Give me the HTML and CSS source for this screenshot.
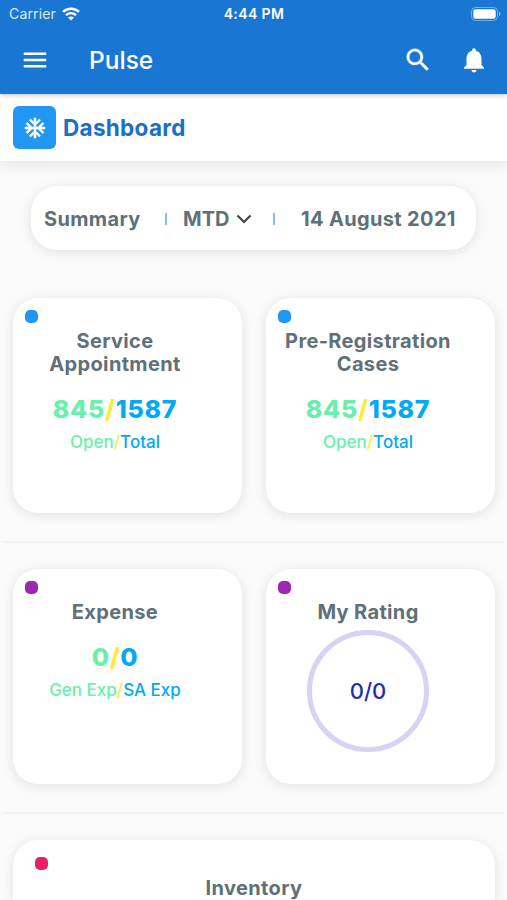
FILE: index.html
```
<!DOCTYPE html>
<html lang="en">
<head>
    <meta charset="UTF-8">
    <meta name="viewport" content="width=device-width, initial-scale=1.0">
    <title>Pulse - Dashboard</title>
    <link rel="stylesheet" href="styles.css">
</head>
<body>

    <header>
        <div class="status-bar">
            <div class="carrier">
                <span>Carrier</span>
                <svg class="wifi" viewBox="0 0 18 14">
                    <path d="M1 4.9C5.5 0.6 12.5 0.6 17 4.9" fill="none" stroke="#fff" stroke-width="2.6"/>
                    <path d="M4 8.2C6.9 5.5 11.1 5.5 14 8.2" fill="none" stroke="#fff" stroke-width="2.4"/>
                    <path d="M9 13.6L6.1 10.7C7.8 9.2 10.2 9.2 11.9 10.7Z" fill="#fff"/>
                </svg>
            </div>
            <span class="time">4:44 PM</span>
            <svg class="battery" viewBox="0 0 30 14">
                <rect x="0.5" y="0.5" width="26" height="13" rx="4" fill="none" stroke="#fff" stroke-opacity="0.4"/>
                <rect x="2.3" y="2.3" width="22.4" height="9.4" rx="2.2" fill="#fff"/>
                <path d="M28 4.8C30 5.5 30 8.5 28 9.2Z" fill="#fff" fill-opacity="0.5"/>
            </svg>
        </div>
        <nav>
            <svg class="icon" viewBox="0 0 24 24"><path d="M3 18h18v-2H3v2zm0-5h18v-2H3v2zm0-7v2h18V6H3z"/></svg>
            <span class="app-name">Pulse</span>
            <svg class="icon search" viewBox="0 0 24 24"><path d="M15.5 14h-.79l-.28-.27C15.41 12.59 16 11.11 16 9.5 16 5.91 13.09 3 9.5 3S3 5.91 3 9.5 5.91 16 9.5 16c1.61 0 3.09-.59 4.23-1.57l.27.28v.79l5 4.99L20.49 19l-4.99-5zm-6 0C7.01 14 5 11.99 5 9.5S7.01 5 9.5 5 14 7.01 14 9.5 11.99 14 9.5 14z"/></svg>
            <svg class="icon bell" viewBox="0 0 24 24"><path d="M12 22c1.1 0 2-.9 2-2h-4c0 1.1.89 2 2 2zm6-6v-5c0-3.07-1.64-5.64-4.5-6.32V4c0-.83-.67-1.5-1.5-1.5s-1.5.67-1.5 1.5v.68C7.63 5.36 6 7.92 6 11v5l-2 2v1h16v-1l-2-2z"/></svg>
        </nav>
    </header>

    <div class="page-title">
        <div class="title-icon">
            <svg viewBox="0 0 24 24"><path d="M22 11h-4.17l3.24-3.24-1.41-1.42L15 11h-2V9l4.66-4.66-1.42-1.41L13 6.17V2h-2v4.17L7.76 2.93 6.34 4.34 11 9v2H9L4.34 6.34 2.93 7.76 6.17 11H2v2h4.17l-3.24 3.24 1.41 1.42L9 13h2v2l-4.66 4.66 1.42 1.41L11 17.83V22h2v-4.17l3.24 3.24 1.42-1.41L13 15v-2h2l4.66 4.66 1.41-1.42L17.83 13H22z"/></svg>
        </div>
        <h1>Dashboard</h1>
    </div>

    <div class="summary">
        <span class="summary-label">Summary</span>
        <span class="bar"></span>
        <span class="period">MTD</span>
        <svg class="chevron" viewBox="0 0 16 10"><path d="M1.5 1.5L8 8L14.5 1.5" fill="none" stroke="#444" stroke-width="2.2"/></svg>
        <span class="bar"></span>
        <span class="date">14 August 2021</span>
    </div>

    <main>
        <div class="row">
            <div class="card">
                <span class="dot blue"></span>
                <h2>Service Appointment</h2>
                <div class="count"><span class="open">845</span><span class="slash">/</span><span class="total">1587</span></div>
                <div class="caption"><span class="open">Open</span><span class="slash">/</span><span class="total">Total</span></div>
            </div>
            <div class="card">
                <span class="dot blue"></span>
                <h2>Pre-Registration Cases</h2>
                <div class="count"><span class="open">845</span><span class="slash">/</span><span class="total">1587</span></div>
                <div class="caption"><span class="open">Open</span><span class="slash">/</span><span class="total">Total</span></div>
            </div>
        </div>

        <hr>

        <div class="row">
            <div class="card">
                <span class="dot purple"></span>
                <h2>Expense</h2>
                <div class="count"><span class="open">0</span><span class="slash">/</span><span class="total">0</span></div>
                <div class="caption"><span class="open">Gen Exp</span><span class="slash">/</span><span class="total">SA Exp</span></div>
            </div>
            <div class="card">
                <span class="dot purple"></span>
                <h2>My Rating</h2>
                <div class="rating">0/0</div>
            </div>
        </div>

        <hr>

        <div class="row">
            <div class="card wide">
                <span class="dot pink"></span>
                <h2>Inventory</h2>
            </div>
        </div>
    </main>

</body>
</html>
```
FILE: styles.css
```
* {
    box-sizing: border-box;
}

body {
    font-family: Inter, "Liberation Sans", sans-serif;
    margin: 0;
    background-color: #fafafa;
    color: #607078;
}

svg {
    display: block;
    flex: none;
}

/* HEADER */
header {
    position: relative;
    z-index: 2;
    height: 94px;
    background: #1976d2;
    color: white;
    box-shadow: 0 1px 5px rgba(0, 0, 0, 0.25);
}

.status-bar {
    display: grid;
    grid-template-columns: 1fr auto 1fr;
    align-items: center;
    height: 27px;
    padding: 0 6px 0 9px;
    font-size: 14px;
}

.carrier {
    display: flex;
    align-items: center;
    gap: 6px;
    color: #dbe9f8;
    letter-spacing: 0.15px;
}

.wifi {
    width: 18px;
    height: 14px;
}

.time {
    font-weight: 600;
    letter-spacing: 0.4px;
    margin-right: 2px;
}

.battery {
    width: 30px;
    height: 14px;
    justify-self: end;
}

nav {
    display: flex;
    align-items: center;
    height: 65px;
    padding: 0 18px 0 20px;
}

.icon {
    width: 30px;
    height: 30px;
    fill: white;
}

.search {
    stroke: white;
    stroke-width: 0.3;
}

.bell {
    margin-left: 26px;
}

.app-name {
    flex: 1;
    margin-left: 39px;
    font-size: 24.5px;
    font-weight: 500;
}

/* PAGE TITLE */
.page-title {
    position: relative;
    display: flex;
    align-items: center;
    gap: 7px;
    height: 67px;
    padding: 0 13px;
    background: white;
    box-shadow: 0 4px 12px rgba(0, 0, 0, 0.09);
}

.title-icon {
    display: flex;
    align-items: center;
    justify-content: center;
    width: 43px;
    height: 43px;
    border-radius: 6px;
    background: #2196f3;
}

.title-icon svg {
    width: 24px;
    height: 24px;
    fill: white;
    stroke: white;
    stroke-width: 0.5;
}

h1 {
    margin: 0;
    font-size: 22.5px;
    font-weight: 700;
    letter-spacing: 0.3px;
    color: #1a6fc9;
}

/* SUMMARY */
.summary {
    display: flex;
    align-items: center;
    height: 64px;
    margin: 25px 31px 48px;
    padding: 1px 13px 0;
    border-radius: 26px;
    background: white;
    box-shadow: 0 2px 12px rgba(0, 0, 0, 0.1);
    font-size: 20px;
    font-weight: 700;
    letter-spacing: 0.35px;
    white-space: nowrap;
}

.summary-label {
    width: 121px;
}

.bar {
    width: 2px;
    height: 12px;
    background: #7fc1f7;
}

.period {
    width: 53px;
    margin-left: 16px;
    letter-spacing: 0;
}

.chevron {
    width: 16px;
    height: 10px;
    margin-right: 21px;
}

.date {
    margin-left: 26px;
}

/* CARDS */
.row {
    display: flex;
    gap: 24px;
    padding: 0 12px 0 13px;
}

.card {
    position: relative;
    flex: 1;
    height: 215px;
    padding: 32px 25px 0 0;
    border-radius: 25px;
    background: white;
    box-shadow: 0 2px 12px rgba(0, 0, 0, 0.1);
    text-align: center;
}

/* runs on to the bottom of the screen */
.card.wide {
    height: 60px;
    padding: 37px 0 0;
    border-radius: 25px 25px 0 0;
}

.dot {
    position: absolute;
    top: 12px;
    left: 12px;
    width: 13px;
    height: 13px;
    border-radius: 5px;
}

.wide .dot {
    top: 17px;
    left: 22px;
}

.blue {
    background: #2196f3;
}

.purple {
    background: #9c27b0;
}

.pink {
    background: #e91e63;
}

h2 {
    margin: 0 auto;
    max-width: 190px;
    font-size: 20px;
    font-weight: 700;
    line-height: 23px;
    letter-spacing: 0.35px;
}

.count {
    margin-top: 18px;
    font-size: 25px;
    font-weight: 800;
    line-height: 30px;
    letter-spacing: 0.7px;
}

.caption {
    margin-top: 6px;
    font-size: 17px;
    font-weight: 500;
    line-height: 24px;
}

.open {
    color: #69f0ae;
}

.slash {
    color: #ffeb3b;
}

.total {
    color: #03a9f4;
}

.rating {
    display: flex;
    align-items: center;
    justify-content: center;
    width: 122px;
    height: 122px;
    margin: 6px auto 0;
    border: 5px solid #d6d4f2;
    border-radius: 50%;
    color: #1f2db0;
    font-size: 22px;
    font-weight: 450;
}

hr {
    height: 2px;
    margin: 28px 3px 26px;
    border: none;
    background: #f3f3f3;
}
```
